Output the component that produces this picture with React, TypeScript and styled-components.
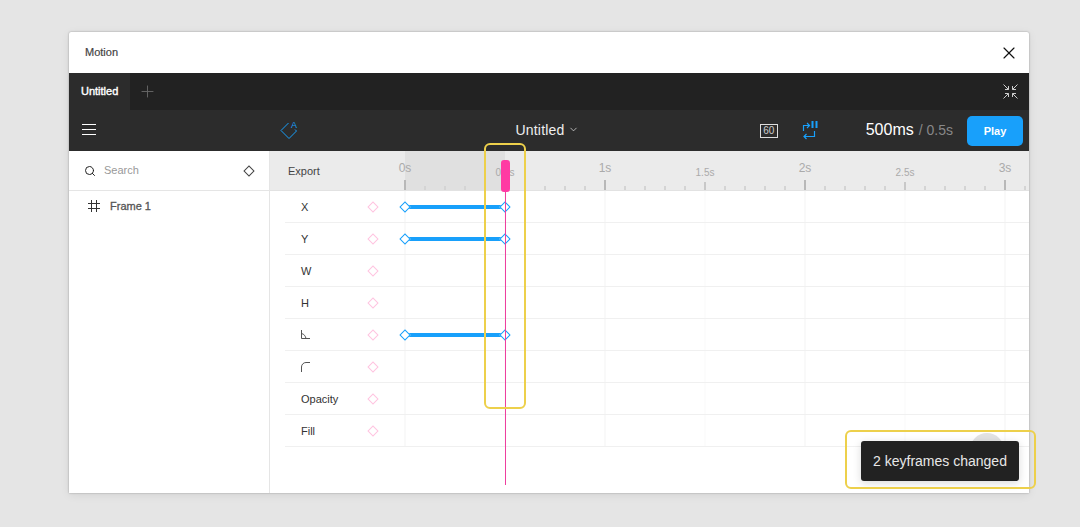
import styled, { createGlobalStyle } from "styled-components"
import { Search, Plus, X, ChevronDown } from "lucide-react"

const GlobalStyle = createGlobalStyle`
    html, body {
        margin: 0;
        height: 100%;
        background: #e5e5e5;
        font-family: "Liberation Sans", Arial, sans-serif;
        overflow: hidden;
    }
`
const Page = styled.div`
    padding: 32px 51px 0 69px;
`
const Window = styled.div`
    position: relative;
    width: 960px;
    height: 461px;
    background: #fff;
    border-radius: 2px 2px 0 0;
    box-shadow: 0 0 2px rgba(0, 0, 0, 0.35), 0 2px 10px rgba(0, 0, 0, 0.08);
    display: flex;
    flex-direction: column;
    overflow: hidden;
`
const TitleBar = styled.div`
    height: 41px;
    flex: none;
    display: flex;
    align-items: center;
    justify-content: space-between;
    padding: 0 10px 0 16px;
`
const TitleText = styled.span`
    padding-bottom: 2px;
    font-size: 11px;
    color: #444;
    -webkit-text-stroke: 0.2px #444;
`
const CloseBtn = styled.div`
    display: flex;
    color: #111;
`
const TabBar = styled.div`
    height: 37px;
    flex: none;
    background: #222;
    display: flex;
    align-items: center;
    padding-right: 11px;
`
const Tab = styled.div`
    height: 100%;
    width: 61px;
    box-sizing: border-box;
    padding: 0 0 2px 12px;
    display: flex;
    align-items: center;
    background: #2c2c2c;
    color: #fff;
    font-size: 11px;
    -webkit-text-stroke: 0.4px #fff;
`
const AddTab = styled.div`
    display: flex;
    margin-left: 8px;
    color: #666;
`
const Collapse = styled.svg`
    margin-left: auto;
`
const Toolbar = styled.div`
    height: 41px;
    flex: none;
    background: #2c2c2c;
    display: grid;
    grid-template-columns: 1fr auto 1fr;
    align-items: center;
    color: #fff;
`
const ToolLeft = styled.div`
    display: flex;
    align-items: center;
    padding-left: 13px;
`
const Hamburger = styled.svg`
    margin-bottom: 2px;
`
const ToolRight = styled.div`
    display: flex;
    align-items: center;
    justify-content: flex-end;
    padding-right: 6px;
`
const AnchorIcon = styled.svg`
    margin-left: 183px;
    overflow: visible;
`
const DocName = styled.div`
    display: flex;
    align-items: center;
    gap: 3px;
    padding: 0 4px 2px 0;
    font-size: 14px;
    letter-spacing: 0.2px;
    color: #eee;
`
const Fps = styled.div`
    box-sizing: border-box;
    width: 18px;
    height: 14px;
    border: 1px solid #ddd;
    font-size: 10px;
    line-height: 12px;
    text-align: center;
    color: #ccc;
`
const LoopIcon = styled.svg`
    margin-left: 24px;
`
const Time = styled.div`
    margin-left: 48px;
    padding-bottom: 2px;
    font-size: 16px;
    color: #fff;
`
const TimeTotal = styled.span`
    font-size: 14px;
    color: #888;
    margin-left: 5px;
`
const PlayBtn = styled.button`
    margin-left: 14px;
    width: 56px;
    height: 30px;
    border: 0;
    border-radius: 5px;
    background: #18a0fb;
    color: #fff;
    font: 700 11px "Liberation Sans", sans-serif;
`
const Body = styled.div`
    flex: 1;
    display: flex;
    min-height: 0;
`
const Sidebar = styled.div`
    width: 201px;
    flex: none;
    box-sizing: border-box;
    border-right: 1px solid #e5e5e5;
`
const SearchRow = styled.div`
    height: 40px;
    box-sizing: border-box;
    border-bottom: 1px solid #e5e5e5;
    display: flex;
    align-items: center;
    padding: 0 16px 0 15px;
    font-size: 11px;
    color: #999;
    gap: 8px;
`
const SearchText = styled.span`
    flex: 1;
    padding-bottom: 2px;
`
const FrameRow = styled.div`
    height: 30px;
    display: flex;
    align-items: center;
    padding-left: 19px;
    gap: 10px;
    font-size: 11px;
    color: #555;
    -webkit-text-stroke: 0.3px #555;
`
const Timeline = styled.div`
    flex: 1;
    min-width: 0;
`
const Ruler = styled.div`
    position: relative;
    height: 40px;
    box-sizing: border-box;
    background: #ebebeb;
    border-bottom: 1px solid #e2e2e2;
    display: flex;
    align-items: center;
    padding-left: 18px;
    font-size: 11px;
    color: #444;
    overflow: hidden;
`
const WorkArea = styled.div`
    position: absolute;
    left: 135px;
    top: 0;
    bottom: 0;
    width: 100px;
    background: #e0e0e0;
`
const ExportLabel = styled.span`
    position: relative;
`
const tickHeight = { second: 10, half: 8, minor: 4 }
const tickColor = { second: "#b8b8b8", half: "#c8c8c8", minor: "#d4d4d4" }
type TickKind = keyof typeof tickHeight

const Tick = styled.div<{ $x: number; $kind: TickKind }>`
    position: absolute;
    left: ${p => p.$x - 1}px;
    bottom: 0;
    width: 2px;
    height: ${p => tickHeight[p.$kind]}px;
    background: ${p => tickColor[p.$kind]};
`
const RulerLabel = styled.span<{ $x: number; $small?: boolean }>`
    position: absolute;
    left: ${p => p.$x}px;
    top: ${p => (p.$small ? 16 : 10)}px;
    transform: translateX(-50%);
    font-size: ${p => (p.$small ? 10 : 12)}px;
    color: #aaa;
`
const Rows = styled.div`
    padding-left: 15px;
`
const Row = styled.div`
    position: relative;
    height: 32px;
    box-sizing: border-box;
    border-bottom: 1px solid #f0f0f0;
    display: flex;
    align-items: center;
`
const RowLabel = styled.div`
    width: 68px;
    padding-left: 16px;
    flex: none;
    font-size: 11px;
    color: #333;
    display: flex;
    align-items: center;
`
const AddKey = styled.div<{ $dark?: boolean }>`
    width: 8px;
    height: 8px;
    box-sizing: border-box;
    border: 1px solid ${p => (p.$dark ? "#444" : "#ffc4e0")};
    background: #fff;
    transform: rotate(45deg);
`
const GridLine = styled.div<{ $x: number; $half?: boolean }>`
    position: absolute;
    left: ${p => p.$x - 1}px;
    top: 0;
    bottom: 0;
    width: 2px;
    background: ${p => (p.$half ? "#fcfcfc" : "#f9f9f9")};
`
const Track = styled.div`
    position: absolute;
    left: 120px;
    top: 14px;
    width: 100px;
    height: 4px;
    background: #18a0fb;
`
const Key = styled.div<{ $x: number }>`
    position: absolute;
    left: ${p => p.$x - 4}px;
    top: 12px;
    width: 8px;
    height: 8px;
    box-sizing: border-box;
    border: 1px solid #18a0fb;
    background: #fff;
    transform: rotate(45deg);
`
const PlayLine = styled.div`
    position: absolute;
    left: 436px;
    top: 150px;
    width: 1px;
    height: 303px;
    background: #ee3f9f;
`
const PlayHead = styled.div`
    position: absolute;
    left: 432px;
    top: 128px;
    width: 9px;
    height: 32px;
    border-radius: 3px;
    background: #ff3aa3;
`
const Highlight = styled.div`
    position: absolute;
    box-sizing: border-box;
    border: 2px solid #edd04b;
    border-radius: 6px;
`
const ColumnHighlight = styled(Highlight)`
    left: 415px;
    top: 111px;
    width: 42px;
    height: 266px;
`
const Ghost = styled.div`
    position: absolute;
    left: 901px;
    top: 401px;
    width: 34px;
    height: 34px;
    border-radius: 50%;
    background: #e2e2e2;
`
const Toast = styled.div`
    position: absolute;
    left: 792px;
    top: 409px;
    width: 158px;
    height: 40px;
    border-radius: 3px;
    background: #222;
    color: #e8e8e8;
    font-size: 14px;
    display: flex;
    align-items: center;
    justify-content: center;
    box-shadow: 0 2px 8px rgba(0, 0, 0, 0.15);
    z-index: 2;
`
const ToastHighlight = styled(Highlight)`
    position: fixed;
    left: 845px;
    top: 430px;
    width: 191px;
    height: 59px;
    z-index: 3;
`

const ticks = Array.from({ length: 32 }, (_, i) => i * 20)
const gridLines = [0, 100, 200, 300, 400, 500, 600]
const rowNames = ["X", "Y", "W", "H", "angle", "radius", "Opacity", "Fill"]
const keyed = ["X", "Y", "angle"]

const kindOf = (t: number): TickKind => {
    if (t % 200 === 0) return "second"
    if (t % 100 === 0) return "half"
    return "minor"
}

function RowName({ name }: { name: string }) {
    if (name === "angle") {
        return (
            <svg width="9" height="9" viewBox="0 0 9 9" fill="none" stroke="#555">
                <path d="M.5 0v8.500H9M.5 3.500C3 4 4.500 6 5 8.500" />
            </svg>
        )
    }
    if (name === "radius") {
        return (
            <svg width="10" height="10" viewBox="0 0 10 10" fill="none" stroke="#555">
                <path d="M.5 10V5A4.500 4.500 0 0 1 5 .5h4" />
            </svg>
        )
    }
    return <>{name}</>
}

function App() {
    return (
        <Page>
            <GlobalStyle />
            <Window>
                <TitleBar>
                    <TitleText>Motion</TitleText>
                    <CloseBtn>
                        <X size={20} strokeWidth={1.4} />
                    </CloseBtn>
                </TitleBar>
                <TabBar>
                    <Tab>Untitled</Tab>
                    <AddTab>
                        <Plus size={19} strokeWidth={1.2} />
                    </AddTab>
                    <Collapse width="15" height="15" viewBox="0 0 15 15" fill="none" stroke="#ccc">
                        <path d="M.5.5l5 5M5.500 2v3.500H2M14.500.5l-5 5M9.500 2v3.500H13M.5 14.500l5-5M2 9.500h3.500V13M14.500 14.500l-5-5M13 9.500H9.500V13" />
                    </Collapse>
                </TabBar>
                <Toolbar>
                    <ToolLeft>
                        <Hamburger width="14" height="11" viewBox="0 0 14 11" stroke="#fff">
                            <path d="M0 .5h14M0 5.500h14M0 10.500h14" />
                        </Hamburger>
                        <AnchorIcon width="20" height="21" viewBox="0 0 20 21" fill="none" stroke="#18a0fb">
                            <path d="M9.500 3L2 10.500l8 8 7.500-7.500-1.500-1.500" />
                            <text x="12" y="7.500" fontSize="9" fill="#18a0fb" stroke="none" fontFamily="Liberation Sans">A</text>
                        </AnchorIcon>
                    </ToolLeft>
                    <DocName>
                        Untitled
                        <ChevronDown size={11} strokeWidth={1.5} />
                    </DocName>
                    <ToolRight>
                        <Fps>60</Fps>
                        <LoopIcon width="16" height="21" viewBox="0 0 16 21" fill="none" stroke="#18a0fb" strokeWidth="1.2">
                            <path d="M1.500 11V5.500H7M5 3l2.500 2.500L5 8M12.500 11v5.500H2M4.500 14l-2.500 2.500 2.500 2.500" />
                            <path d="M10.500 1v7M14.500 1v7" strokeWidth="2" />
                        </LoopIcon>
                        <Time>
                            500ms<TimeTotal>/ 0.5s</TimeTotal>
                        </Time>
                        <PlayBtn>Play</PlayBtn>
                    </ToolRight>
                </Toolbar>
                <Body>
                    <Sidebar>
                        <SearchRow>
                            <Search size={12} color="#222" strokeWidth={2} />
                            <SearchText>Search</SearchText>
                            <AddKey $dark />
                        </SearchRow>
                        <FrameRow>
                            <svg width="12" height="12" viewBox="0 0 12 12" stroke="#333">
                                <path d="M3.500 0v12M8.500 0v12M0 3.500h12M0 8.500h12" />
                            </svg>
                            Frame 1
                        </FrameRow>
                    </Sidebar>
                    <Timeline>
                        <Ruler>
                            <WorkArea />
                            <ExportLabel>Export</ExportLabel>
                            {ticks.map(t => (
                                <Tick key={t} $x={135 + t} $kind={kindOf(t)} />
                            ))}
                            <RulerLabel $x={135}>0s</RulerLabel>
                            <RulerLabel $x={235} $small>0.5s</RulerLabel>
                            <RulerLabel $x={335}>1s</RulerLabel>
                            <RulerLabel $x={435} $small>1.5s</RulerLabel>
                            <RulerLabel $x={535}>2s</RulerLabel>
                            <RulerLabel $x={635} $small>2.5s</RulerLabel>
                            <RulerLabel $x={735}>3s</RulerLabel>
                        </Ruler>
                        <Rows>
                            {rowNames.map(name => (
                                <Row key={name}>
                                    <RowLabel>
                                        <RowName name={name} />
                                    </RowLabel>
                                    <AddKey />
                                    {gridLines.map(t => (
                                        <GridLine key={t} $x={120 + t} $half={t % 200 !== 0} />
                                    ))}
                                    {keyed.includes(name) && (
                                        <>
                                            <Track />
                                            <Key $x={120} />
                                            <Key $x={220} />
                                        </>
                                    )}
                                </Row>
                            ))}
                        </Rows>
                    </Timeline>
                </Body>
                <PlayLine />
                <PlayHead />
                <ColumnHighlight />
                <Ghost />
                <Toast>2 keyframes changed</Toast>
            </Window>
            <ToastHighlight />
        </Page>
    )
}

export default App
